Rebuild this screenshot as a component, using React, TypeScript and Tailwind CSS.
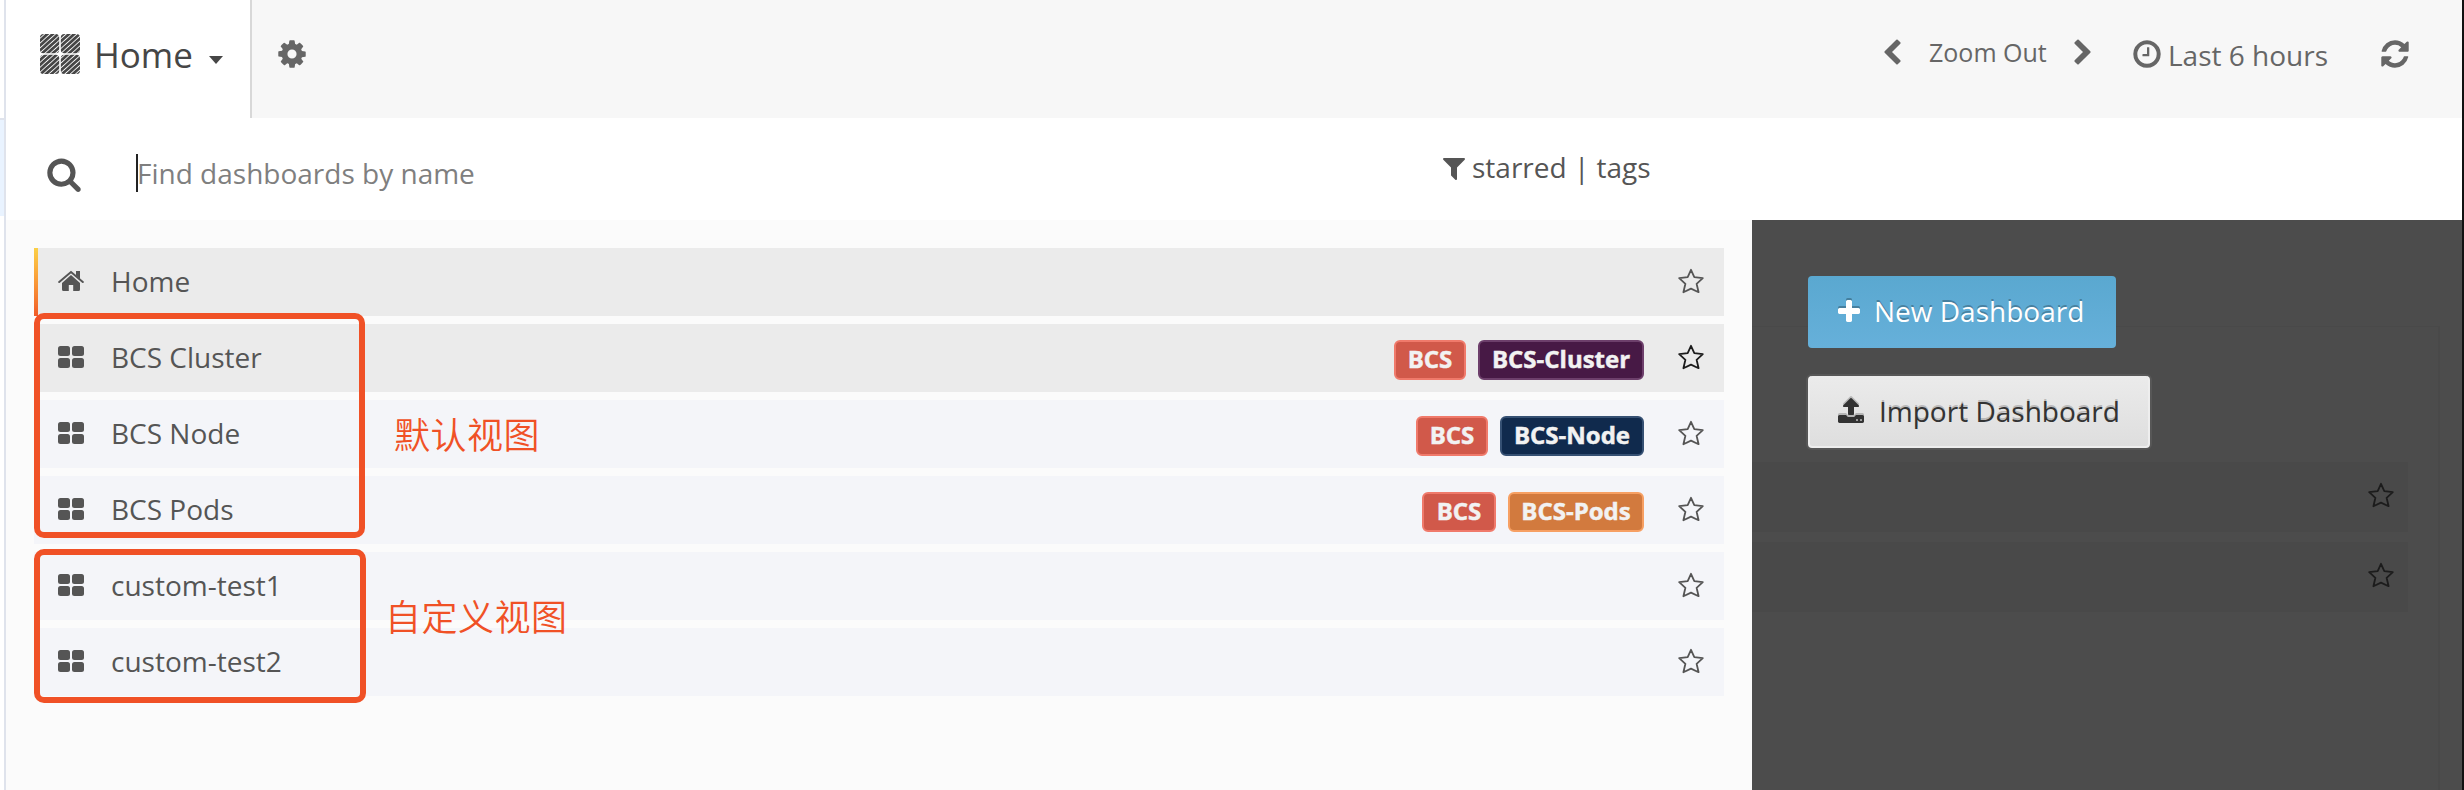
import React from "react";

const PATHS = {
  search: "M1216 832q0-185-131.5-316.5t-316.5-131.5-316.5 131.5-131.5 316.5 131.5 316.5 316.5 131.5 316.5-131.5 131.5-316.5zm512 832q0 52-38 90t-90 38q-54 0-90-38l-343-342q-179 124-399 124-143 0-273.5-55.5t-225-150-150-225-55.5-273.5 55.5-273.5 150-225 225-150 273.5-55.5 273.5 55.5 225 150 150 225 55.5 273.5q0 220-124 399l343 343q37 37 37 90z",
  cog: "M1152 896q0-106-75-181t-181-75-181 75-75 181 75 181 181 75 181-75 75-181zm512-109v222q0 12-8 23t-20 13l-185 28q-19 54-39 91 35 50 107 138 10 12 10 25t-9 23q-27 37-99 108t-94 71q-12 0-26-9l-138-108q-44 23-91 38-16 136-29 186-7 28-36 28h-222q-14 0-24.5-8.5t-11.5-21.5l-28-184q-49-16-90-37l-141 107q-10 9-25 9-14 0-25-11-126-114-165-168-7-10-7-23 0-12 8-23 15-21 51-66.5t54-70.5q-27-50-41-99l-183-27q-13-2-21-12.5t-8-23.5v-222q0-12 8-23t19-13l186-28q14-46 39-92-40-57-107-138-10-12-10-24 0-10 9-23 26-36 98.5-107.5t94.5-71.5q13 0 26 10l138 107q44-23 91-38 16-136 29-186 7-28 36-28h222q14 0 24.5 8.5t11.5 21.5l28 184q49 16 90 37l142-107q9-9 24-9 13 0 25 10 129 119 165 170 7 8 7 22 0 12-8 23-15 21-51 66.5t-54 70.5q26 50 41 98l183 28q13 2 21 12.5t8 23.5z",
  clock: "M1024 544v448q0 14-9 23t-23 9h-320q-14 0-23-9t-9-23v-64q0-14 9-23t23-9h224v-352q0-14 9-23t23-9h64q14 0 23 9t9 23zm416 352q0-148-73-273t-198-198-273-73-273 73-198 198-73 273 73 273 198 198 273 73 273-73 198-198 73-273zm224 0q0 209-103 385.5t-279.5 279.5-385.5 103-385.5-103-279.5-279.5-103-385.5 103-385.5 279.5-279.5 385.5-103 385.5 103 279.5 279.5 103 385.5z",
  refresh: "M1639 1056q0 5-1 7-64 268-268 434.5t-478 166.5q-146 0-282.5-55t-243.5-157l-129 129q-19 19-45 19t-45-19-19-45v-448q0-26 19-45t45-19h448q26 0 45 19t19 45-19 45l-137 137q71 66 161 102t187 36q134 0 250-65t186-179q11-17 53-117 8-23 30-23h192q13 0 22.5 9.5t9.5 22.5zm25-800v448q0 26-19 45t-45 19h-448q-26 0-45-19t-19-45 19-45l138-138q-148-137-349-137-134 0-250 65t-186 179q-11 17-53 117-8 23-30 23h-199q-13 0-22.5-9.5t-9.5-22.5v-7q65-268 270-434.5t480-166.5q146 0 284 55.5t245 156.5l130-129q19-19 45-19t45 19 19 45z",
  filter: "M1595 295q17 41-14 70l-493 493v742q0 42-39 59-13 5-25 5-27 0-45-19l-256-256q-19-19-19-45v-486l-493-493q-31-29-14-70 17-39 59-39h1280q42 0 59 39z",
  plus: "M1600 736v192q0 40-28 68t-68 28h-416v416q0 40-28 68t-68 28h-192q-40 0-68-28t-28-68v-416h-416q-40 0-68-28t-28-68v-192q0-40 28-68t68-28h416v-416q0-40 28-68t68-28h192q40 0 68 28t28 68v416h416q40 0 68 28t28 68z",
  upload: "M1344 1472q0-26-19-45t-45-19-45 19-19 45 19 45 45 19 45-19 19-45zm256 0q0-26-19-45t-45-19-45 19-19 45 19 45 45 19 45-19 19-45zm128-224v320q0 40-28 68t-68 28h-1472q-40 0-68-28t-28-68v-320q0-40 28-68t68-28h427q21 56 70.5 92t110.5 36h256q61 0 110.5-36t70.5-92h427q40 0 68 28t28 68zm-325-648q-17 40-59 40h-256v448q0 26-19 45t-45 19h-256q-26 0-45-19t-19-45v-448h-256q-42 0-59-40-17-39 14-69l448-448q18-19 45-19t45 19l448 448q31 30 14 69z",
  left: "M1427 301l-531 531 531 531q19 19 19 45t-19 45l-166 166q-19 19-45 19t-45-19l-742-742q-19-19-19-45t19-45l742-742q19-19 45-19t45 19l166 166q19 19 19 45t-19 45z",
  right: "M1363 877l-742 742q-19 19-45 19t-45-19l-166-166q-19-19-19-45t19-45l531-531-531-531q-19-19-19-45t19-45l166-166q19-19 45-19t45 19l742 742q19 19 19 45t-19 45z",
};

function Glyph({ name, className }: { name: keyof typeof PATHS; className: string }) {
  return (
    <svg viewBox="0 0 1792 1792" fill="currentColor" className={`shrink-0 overflow-visible ${className}`}>
      <path d={PATHS[name]} />
    </svg>
  );
}

function Star({ className }: { className: string }) {
  return (
    <svg viewBox="0 0 26 26" fill="none" stroke="currentColor" strokeWidth="1.8" strokeLinejoin="round" className={`size-[26px] shrink-0 ${className}`}>
      <path d="M13 1.8 L16.3 9.2 L24.8 10.2 L18.6 15.8 L20.6 24.2 L13 20.6 L5.4 24.2 L7.4 15.8 L1.2 10.2 L9.7 9.2 Z" />
    </svg>
  );
}

function Tiles() {
  return (
    <svg viewBox="0 0 26 22" fill="currentColor" className="h-[22px] w-[26px] shrink-0">
      <rect x="0" y="0" width="12" height="10" rx="2.5" />
      <rect x="14" y="0" width="12" height="10" rx="2.5" />
      <rect x="0" y="12" width="12" height="10" rx="2.5" />
      <rect x="14" y="12" width="12" height="10" rx="2.5" />
    </svg>
  );
}

function House() {
  return (
    <svg viewBox="0 0 26 22" fill="currentColor" className="h-[22px] w-[26px] shrink-0">
      <path d="M13 5 L22 13 V19.5 Q22 21 20.5 21 H15.2 V15 H10.8 V21 H5.5 Q4 21 4 19.5 V13 Z" />
      <path d="M1.2 12 L13 2 L24.8 12" fill="none" stroke="currentColor" strokeWidth="2" strokeLinecap="round" />
      <path d="M18 1 H22 V9 L18 5.4 Z" />
    </svg>
  );
}

function Logo() {
  return (
    <svg viewBox="0 0 40 40" className="size-10 shrink-0">
      <defs>
        <pattern id="hatch" width="3.6" height="3.6" patternUnits="userSpaceOnUse" patternTransform="rotate(48)">
          <rect width="3.6" height="3.6" fill="#f4f4f4" />
          <rect width="2.7" height="3.6" fill="#464646" />
        </pattern>
      </defs>
      <g fill="url(#hatch)">
        <rect x="0" y="0" width="19.2" height="19.2" rx="3.5" />
        <rect x="20.8" y="0" width="19.2" height="19.2" rx="3.5" />
        <rect x="0" y="20.8" width="19.2" height="19.2" rx="3.5" />
        <rect x="20.8" y="20.8" width="19.2" height="19.2" rx="3.5" />
      </g>
    </svg>
  );
}

type Tag = { text: string; color: string };
const ROWS: { name: string; bg: string; star: string; home?: boolean; tags: Tag[] }[] = [
  { name: "Home", bg: "bg-[#ebebeb]", star: "text-[#555]", home: true, tags: [] },
  {
    name: "BCS Cluster", bg: "bg-[#ebebeb]", star: "text-[#1c1c1c]",
    tags: [{ text: "BCS", color: "w-[72px] border-[#f07a6b] bg-[#d1594a]" }, { text: "BCS-Cluster", color: "w-[166px] border-[#6d3f6b] bg-[#471945]" }],
  },
  {
    name: "BCS Node", bg: "bg-[#f4f5f9]", star: "text-[#555]",
    tags: [{ text: "BCS", color: "w-[72px] border-[#f07a6b] bg-[#d1594a]" }, { text: "BCS-Node", color: "w-[144px] border-[#355073] bg-[#102a4d]" }],
  },
  {
    name: "BCS Pods", bg: "bg-[#f4f5f9]", star: "text-[#555]",
    tags: [{ text: "BCS", color: "w-[74px] border-[#f07a6b] bg-[#d1594a]" }, { text: "BCS-Pods", color: "w-[136px] border-[#f7a063] bg-[#d27a3e]" }],
  },
  { name: "custom-test1", bg: "bg-[#f4f5f9]", star: "text-[#555]", tags: [] },
  { name: "custom-test2", bg: "bg-[#f4f5f9]", star: "text-[#555]", tags: [] },
];

export default function App() {
  return (
    <div className="relative flex h-[790px] w-[2464px] overflow-hidden bg-white font-['Open_Sans',sans-serif] text-[28px] leading-10 text-[#555]">
      <div className="flex w-[6px] shrink-0 flex-col border-r-2 border-[#dfe3ec] pt-[118px]">
        <div className="h-[98px] border-t-2 border-[#dfe3ec] bg-[#e9f3ff]" />
      </div>

      <div className="flex min-w-0 flex-1 flex-col">
        <header className="flex h-[118px] shrink-0 bg-[#f7f7f7] text-[#666]">
          <div className="flex w-[246px] items-start border-r-2 border-[#d8d8d8] bg-white pt-[34px] pl-[34px] text-[#464646]">
            <Logo />
            <span className="ml-[14px] w-[99px] text-[35px] leading-[42px]">Home</span>
            <svg viewBox="0 0 14 8" fill="currentColor" className="mt-[22px] ml-[16px] h-2 w-3.5">
              <path d="M0 0H14L7 8Z" />
            </svg>
          </div>
          <Glyph name="cog" className="mt-[38px] ml-[24px] size-8" />
          <div className="ml-auto flex items-start pr-[51px]">
            <Glyph name="left" className="mt-[39px] size-[28px]" />
            <span className="mt-[32px] ml-[23px] w-[118px] text-[25px] whitespace-nowrap">Zoom Out</span>
            <Glyph name="right" className="mt-[39px] ml-[22px] size-[28px]" />
            <Glyph name="clock" className="mt-[38px] ml-[34px] size-8" />
            <span className="mt-[35px] ml-[5px] w-[161px] whitespace-nowrap">Last 6 hours</span>
            <Glyph name="refresh" className="mt-[38px] ml-[50px] size-8" />
          </div>
        </header>

        <div className="flex h-[102px] shrink-0 items-start bg-white">
          <Glyph name="search" className="mt-[38px] ml-[40px] size-[36px]" />
          <div className="mt-[36px] ml-[54px] h-[38px] w-[2px] bg-[#222]" />
          <span className="-ml-px mt-[35px] w-[1303px] text-[#7f7f7f]">Find dashboards by name</span>
          <Glyph name="filter" className="mt-[36px] size-7" />
          <span className="mt-[29px] ml-[4px] whitespace-pre">starred | tags</span>
        </div>

        <div className="flex min-h-0 flex-1">
          <main className="flex w-[1746px] shrink-0 flex-col gap-2 bg-[#fbfbfb] pt-7 pr-7 pl-7">
            {ROWS.map((r) => (
              <div key={r.name} className={`flex h-[68px] shrink-0 items-center ${r.bg}`}>
                <div className={r.home ? "h-full w-1 bg-gradient-to-b from-[#fbd047] to-[#f05a28]" : "h-full w-1"} />
                <div className="ml-5 flex pb-[2px]">{r.home ? <House /> : <Tiles />}</div>
                <span className="ml-[27px] flex-1 pb-[2px]">{r.name}</span>
                <div className="mt-1 flex gap-3">
                  {r.tags.map((t) => (
                    <span key={t.text} className={`flex h-10 items-center justify-center rounded-md border-2 pb-[3px] text-[24px] font-bold whitespace-nowrap text-[#f2f2f2] [-webkit-text-stroke:0.5px_#f2f2f2] ${t.color}`}>
                      {t.text}
                    </span>
                  ))}
                </div>
                <Star className={`mr-5 mb-[2px] ml-[34px] ${r.star}`} />
              </div>
            ))}
          </main>

          <aside className="relative flex flex-1 flex-col items-start bg-[#4c4c4c] pt-[56px] pl-[56px]">
            <div className="absolute top-[106px] bottom-0 left-0 w-[688px] border-t border-r-2 border-[#494949]" />
            <div className="absolute top-[242px] left-0 h-[70px] w-[656px] bg-[#494949]" />
            <div className="absolute top-[322px] left-0 h-[70px] w-[656px] bg-[#494949]" />
            <Star className="absolute top-[262px] left-[616px] text-[#1c1c1c]" />
            <Star className="absolute top-[342px] left-[616px] text-[#1c1c1c]" />
            <button className="relative flex h-[72px] w-[308px] items-center rounded-[4px] bg-gradient-to-b from-[#5aa8d0] to-[#66b0da] pl-7 text-white [text-shadow:0_-2px_0_rgba(0,0,0,0.25)]">
              <Glyph name="plus" className="-ml-px size-7 [filter:drop-shadow(0_-2px_0_rgba(0,0,0,0.25))]" />
              <span className="ml-[11px] pb-[2px] whitespace-nowrap">New Dashboard</span>
            </button>
            <button className="relative mt-[28px] flex h-[72px] w-[342px] items-center rounded-[4px] border-x-2 border-b-2 border-[#eee] bg-gradient-to-b from-[#ebebeb] to-[#dedede] pl-[27px] text-[#333] shadow-[0_0_0_2px_rgba(90,90,90,0.8)] [text-shadow:0_-2px_0_rgba(0,0,0,0.2)]">
              <Glyph name="upload" className="size-7 [filter:drop-shadow(0_-2px_0_rgba(0,0,0,0.2))]" />
              <span className="ml-[14px] whitespace-nowrap">Import Dashboard</span>
            </button>
          </aside>
        </div>
      </div>
      <div className="w-[2px] shrink-0 bg-[#111]" />

      <div className="absolute top-[313px] left-[34px] h-[225px] w-[331px] rounded-[10px] border-[6px] border-[#f05126]" />
      <div className="absolute top-[549px] left-[34px] h-[154px] w-[332px] rounded-[10px] border-[6px] border-[#f05126]" />
      <span className="absolute top-[408px] left-[394px] font-['Noto_Sans_CJK_SC',sans-serif] text-[36px] leading-[50px] font-[350] tracking-[0.5px] whitespace-nowrap text-[#f05126]">默认视图</span>
      <span className="absolute top-[590px] left-[385px] font-['Noto_Sans_CJK_SC',sans-serif] text-[36px] leading-[50px] font-[350] tracking-[0.5px] whitespace-nowrap text-[#f05126]">自定义视图</span>
    </div>
  );
}
